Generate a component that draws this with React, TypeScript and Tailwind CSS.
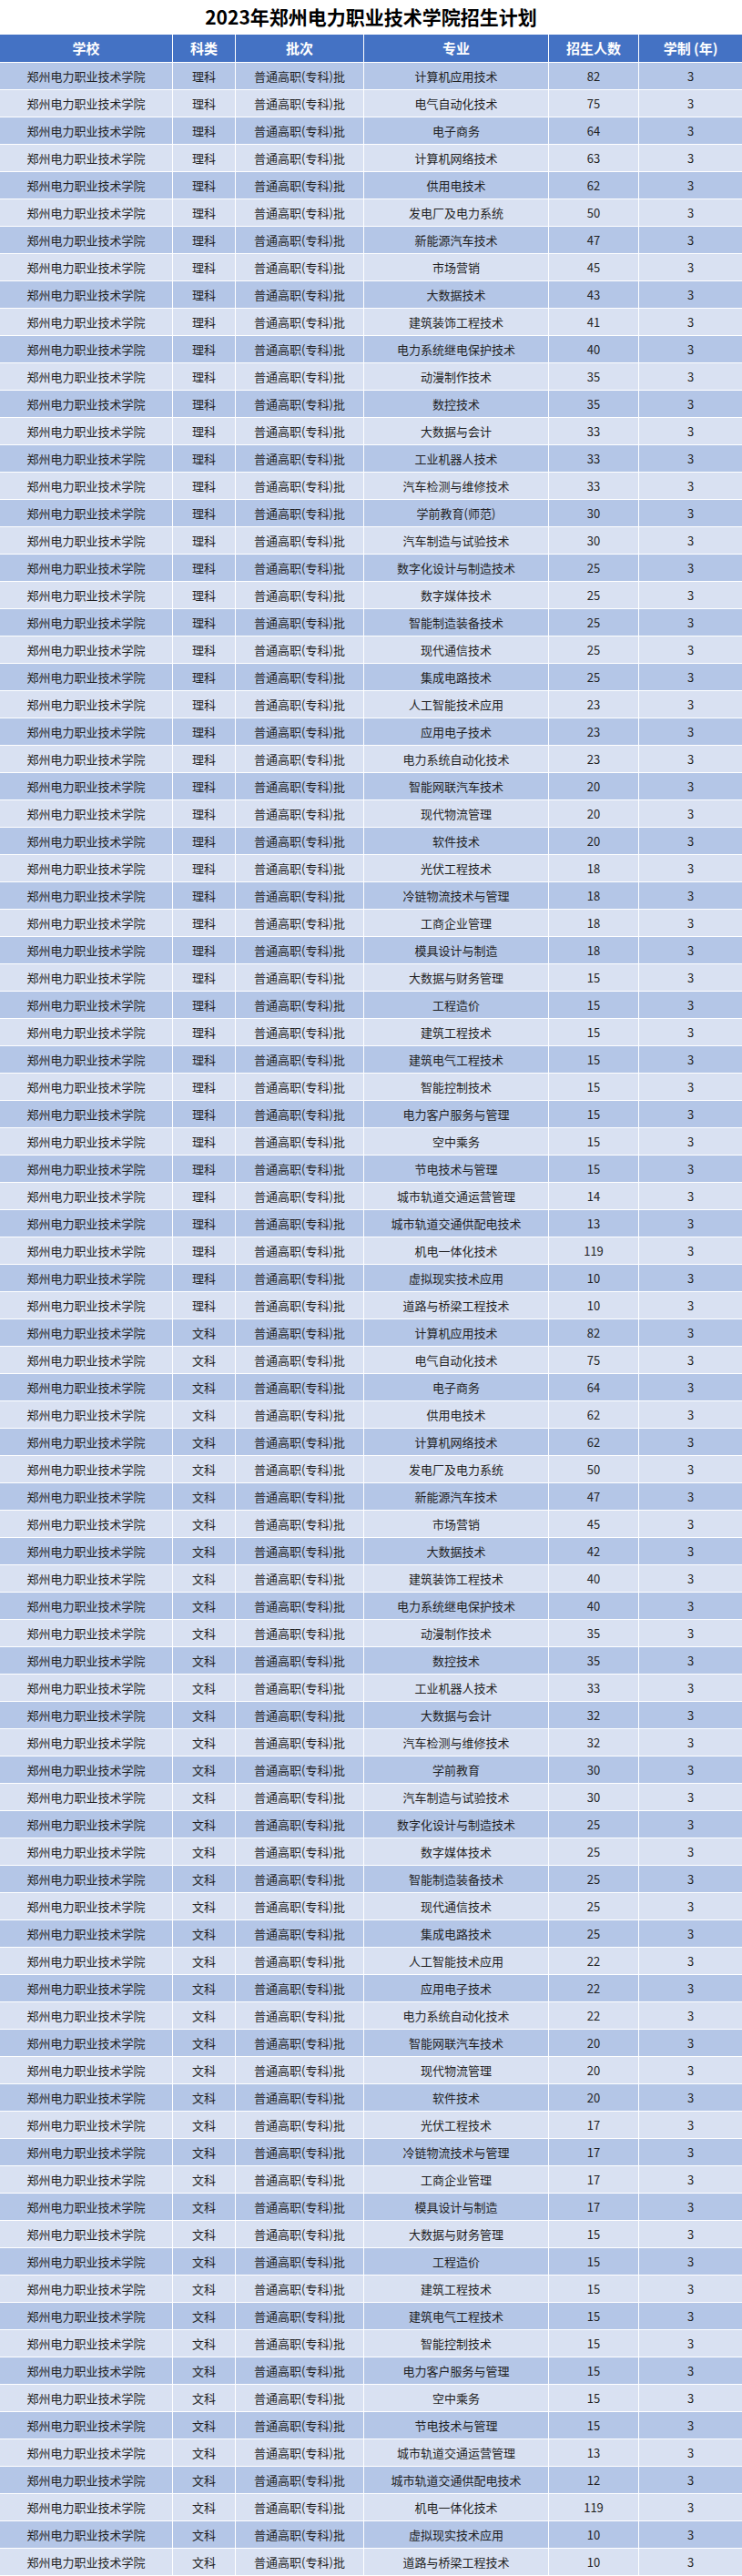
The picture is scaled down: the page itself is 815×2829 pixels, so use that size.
const school = "郑州电力职业技术学院";
const batch = "普通高职(专科)批";

const science: [string, number][] = [
  ["计算机应用技术", 82],
  ["电气自动化技术", 75],
  ["电子商务", 64],
  ["计算机网络技术", 63],
  ["供用电技术", 62],
  ["发电厂及电力系统", 50],
  ["新能源汽车技术", 47],
  ["市场营销", 45],
  ["大数据技术", 43],
  ["建筑装饰工程技术", 41],
  ["电力系统继电保护技术", 40],
  ["动漫制作技术", 35],
  ["数控技术", 35],
  ["大数据与会计", 33],
  ["工业机器人技术", 33],
  ["汽车检测与维修技术", 33],
  ["学前教育(师范)", 30],
  ["汽车制造与试验技术", 30],
  ["数字化设计与制造技术", 25],
  ["数字媒体技术", 25],
  ["智能制造装备技术", 25],
  ["现代通信技术", 25],
  ["集成电路技术", 25],
  ["人工智能技术应用", 23],
  ["应用电子技术", 23],
  ["电力系统自动化技术", 23],
  ["智能网联汽车技术", 20],
  ["现代物流管理", 20],
  ["软件技术", 20],
  ["光伏工程技术", 18],
  ["冷链物流技术与管理", 18],
  ["工商企业管理", 18],
  ["模具设计与制造", 18],
  ["大数据与财务管理", 15],
  ["工程造价", 15],
  ["建筑工程技术", 15],
  ["建筑电气工程技术", 15],
  ["智能控制技术", 15],
  ["电力客户服务与管理", 15],
  ["空中乘务", 15],
  ["节电技术与管理", 15],
  ["城市轨道交通运营管理", 14],
  ["城市轨道交通供配电技术", 13],
  ["机电一体化技术", 119],
  ["虚拟现实技术应用", 10],
  ["道路与桥梁工程技术", 10],
];

const arts: [string, number][] = [
  ["计算机应用技术", 82],
  ["电气自动化技术", 75],
  ["电子商务", 64],
  ["供用电技术", 62],
  ["计算机网络技术", 62],
  ["发电厂及电力系统", 50],
  ["新能源汽车技术", 47],
  ["市场营销", 45],
  ["大数据技术", 42],
  ["建筑装饰工程技术", 40],
  ["电力系统继电保护技术", 40],
  ["动漫制作技术", 35],
  ["数控技术", 35],
  ["工业机器人技术", 33],
  ["大数据与会计", 32],
  ["汽车检测与维修技术", 32],
  ["学前教育", 30],
  ["汽车制造与试验技术", 30],
  ["数字化设计与制造技术", 25],
  ["数字媒体技术", 25],
  ["智能制造装备技术", 25],
  ["现代通信技术", 25],
  ["集成电路技术", 25],
  ["人工智能技术应用", 22],
  ["应用电子技术", 22],
  ["电力系统自动化技术", 22],
  ["智能网联汽车技术", 20],
  ["现代物流管理", 20],
  ["软件技术", 20],
  ["光伏工程技术", 17],
  ["冷链物流技术与管理", 17],
  ["工商企业管理", 17],
  ["模具设计与制造", 17],
  ["大数据与财务管理", 15],
  ["工程造价", 15],
  ["建筑工程技术", 15],
  ["建筑电气工程技术", 15],
  ["智能控制技术", 15],
  ["电力客户服务与管理", 15],
  ["空中乘务", 15],
  ["节电技术与管理", 15],
  ["城市轨道交通运营管理", 13],
  ["城市轨道交通供配电技术", 12],
  ["机电一体化技术", 119],
  ["虚拟现实技术应用", 10],
  ["道路与桥梁工程技术", 10],
];

const rows = [
  ...science.map(([major, count]) => ({ type: "理科", major, count })),
  ...arts.map(([major, count]) => ({ type: "文科", major, count })),
];

const headers = ["学校", "科类", "批次", "专业", "招生人数", "学制 (年)"];

export default function App() {
  return (
    <main className="w-[815px] bg-white font-['Noto_Sans_CJK_SC',sans-serif]">
      <h1 className="h-[38px] flex items-center justify-center text-[21px] font-bold text-black">
        2023年郑州电力职业技术学院招生计划
      </h1>

      <div className="grid grid-cols-[189px_68px_140px_202px_98px_113px] gap-px bg-white pb-px">
        {headers.map((h) => (
          <div
            key={h}
            className="h-[30px] flex items-center justify-center bg-[#4472c4] text-white text-[15px] font-bold whitespace-pre"
          >
            {h}
          </div>
        ))}

        {rows.map((r, i) => {
          const bg = i % 2 === 0 ? "bg-[#b4c6e7]" : "bg-[#d9e1f2]";
          const cell = `h-[29px] flex items-center justify-center text-[13px] text-[#1f1f1f] whitespace-nowrap ${bg}`;
          return [
            <div key={`${i}-a`} className={cell}>{school}</div>,
            <div key={`${i}-b`} className={cell}>{r.type}</div>,
            <div key={`${i}-c`} className={cell}>{batch}</div>,
            <div key={`${i}-d`} className={cell}>{r.major}</div>,
            <div key={`${i}-e`} className={cell}>{r.count}</div>,
            <div key={`${i}-f`} className={cell}>3</div>,
          ];
        })}
      </div>
    </main>
  );
}
